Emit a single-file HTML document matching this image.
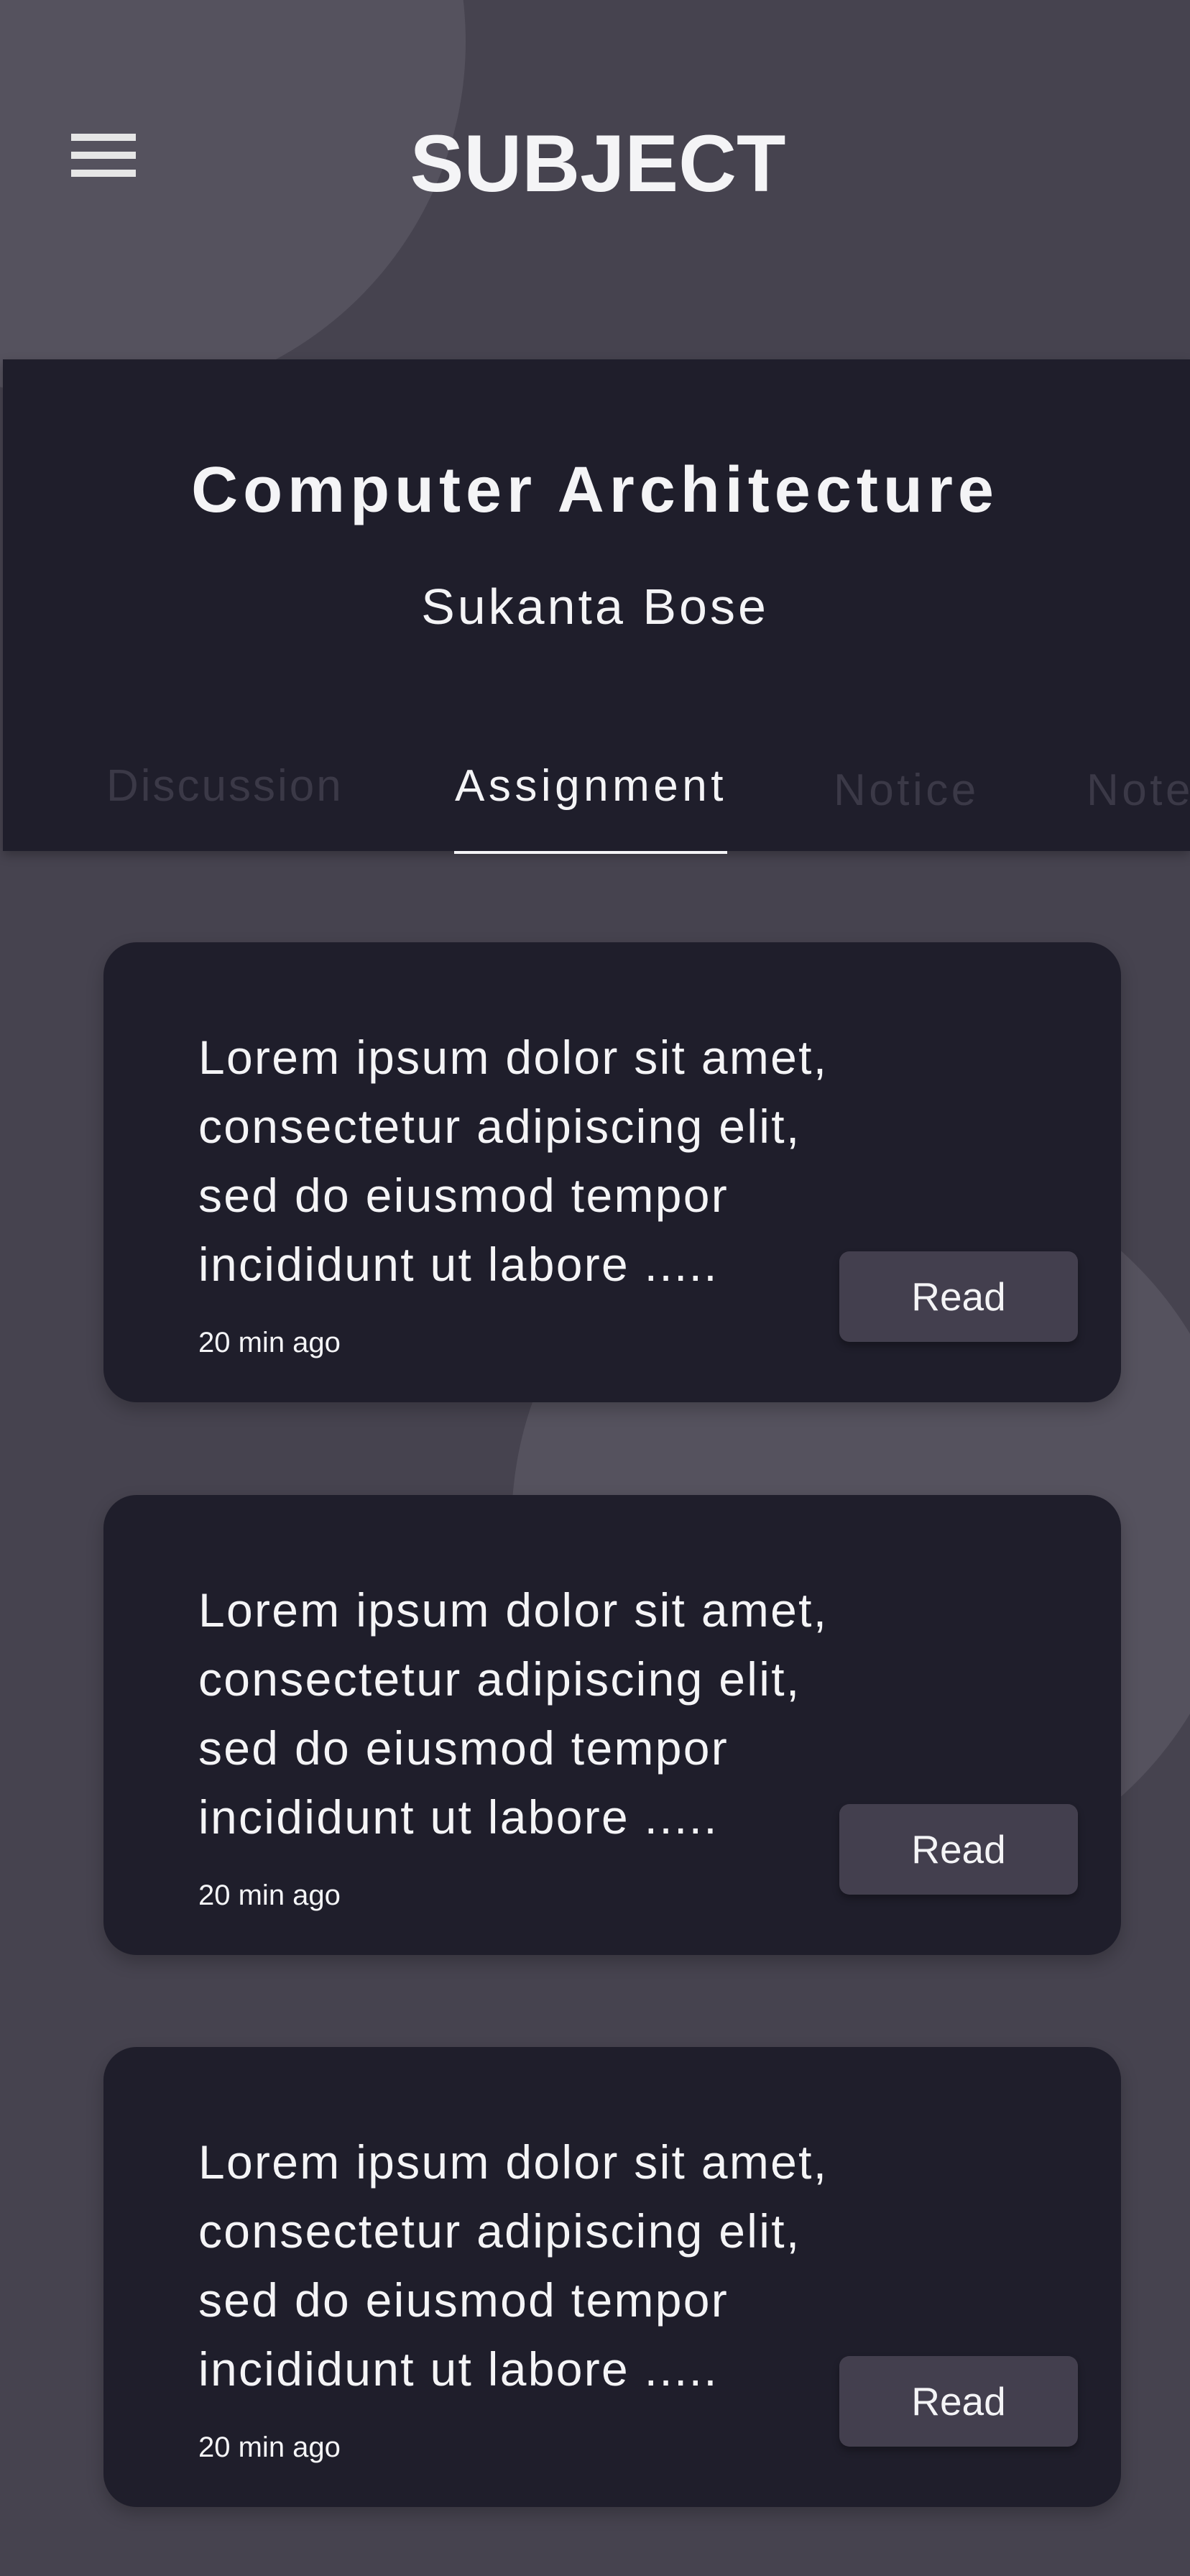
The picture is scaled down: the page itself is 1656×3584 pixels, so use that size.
<!DOCTYPE html>
<html><head><meta charset="utf-8"><style>
html,body{margin:0;padding:0}
body{width:1656px;height:3584px;background:#46434f;position:relative;overflow:hidden;font-family:"Liberation Sans",sans-serif;color:#f4f4f6}
.circ{position:absolute;border-radius:50%;background:#55525e}
.abs{position:absolute;white-space:nowrap}
.panel{position:absolute;left:4px;top:500px;width:1652px;height:684px;background:#1f1e2b;box-shadow:0 6px 14px rgba(0,0,0,.25)}
.ham{position:absolute;left:99px;width:90px;height:10px;background:#e6e6e6}
.tab{position:absolute;top:1063px;font-size:62px;line-height:62px;letter-spacing:4px;color:#3b3947}
.card{position:absolute;left:144px;width:1416px;height:640px;background:#1f1e2b;border-radius:46px;box-shadow:0 10px 24px rgba(0,0,0,.22)}
.txt{position:absolute;left:132px;top:112px;font-size:66px;line-height:96px;letter-spacing:2.3px;white-space:nowrap;color:#f4f4f6}
.time{position:absolute;left:132px;top:537px;font-size:40px;line-height:40px;color:#f4f4f6}
.btn{position:absolute;left:1024px;top:430px;width:332px;height:126px;background:#433f4e;border-radius:14px;box-shadow:0 6px 10px rgba(0,0,0,.3);display:flex;align-items:center;justify-content:center;font-size:55px;color:#f4f4f6}
</style></head><body>
<div class="circ" style="left:-356px;top:-444px;width:1004px;height:1004px"></div>
<div class="circ" style="left:712px;top:1611px;width:1018px;height:1018px"></div>
<div class="ham" style="top:186px"></div>
<div class="ham" style="top:211px"></div>
<div class="ham" style="top:236px"></div>
<div class="abs" style="left:0;width:1664px;text-align:center;top:172px;font-size:112px;line-height:112px;font-weight:bold;color:#f4f4f6">SUBJECT</div>
<div class="panel"></div>
<div class="abs" style="left:0;width:1656px;text-align:center;top:637px;font-size:90px;line-height:90px;font-weight:bold;letter-spacing:7px">Computer Architecture</div>
<div class="abs" style="left:0;width:1656px;text-align:center;top:809px;font-size:70px;line-height:70px;letter-spacing:4px">Sukanta Bose</div>
<div class="tab abs" style="left:148px;letter-spacing:3px">Discussion</div>
<div class="tab abs" style="left:633px;color:#f4f4f6;letter-spacing:5.5px">Assignment</div>
<div class="tab abs" style="left:1160px;top:1069px;letter-spacing:4.5px">Notice</div>
<div class="tab abs" style="left:1512px;top:1069px;letter-spacing:4.5px">Notes</div>
<div class="abs" style="left:632px;top:1184px;width:380px;height:4px;background:#f4f4f6"></div>

<div class="card" style="top:1311px"><div class="txt">Lorem ipsum dolor sit amet,<br>consectetur adipiscing elit,<br>sed do eiusmod tempor<br>incididunt ut labore .....</div><div class="time">20 min ago</div><div class="btn">Read</div></div>
<div class="card" style="top:2080px"><div class="txt">Lorem ipsum dolor sit amet,<br>consectetur adipiscing elit,<br>sed do eiusmod tempor<br>incididunt ut labore .....</div><div class="time">20 min ago</div><div class="btn">Read</div></div>
<div class="card" style="top:2848px"><div class="txt">Lorem ipsum dolor sit amet,<br>consectetur adipiscing elit,<br>sed do eiusmod tempor<br>incididunt ut labore .....</div><div class="time">20 min ago</div><div class="btn">Read</div></div>
</body></html>
